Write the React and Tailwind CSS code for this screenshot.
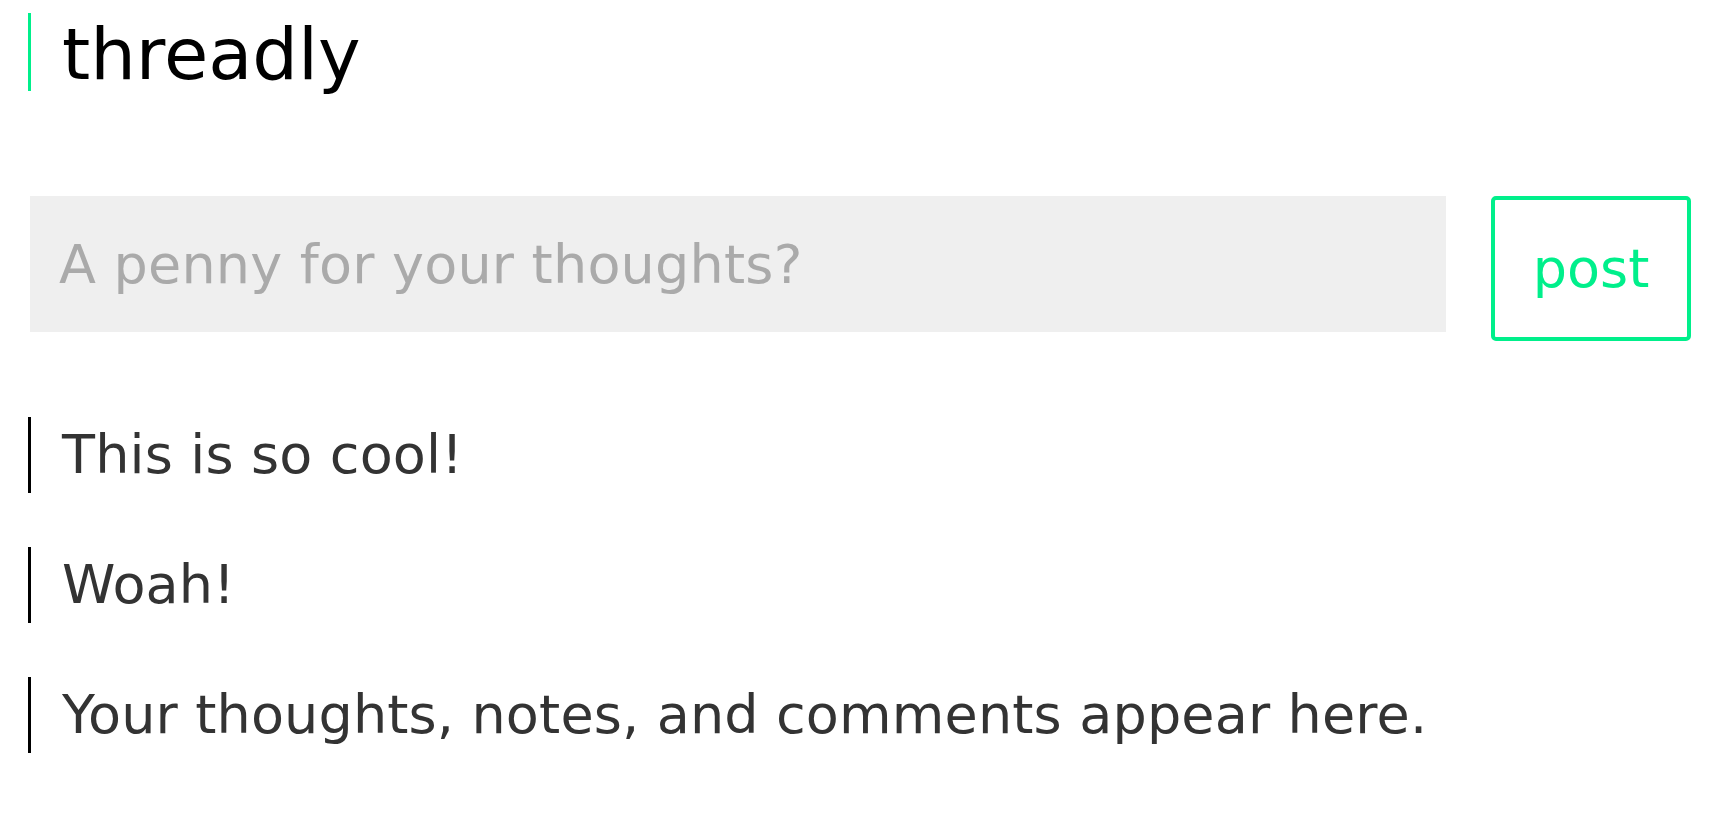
import React, { useState } from 'react';

const initialThoughts = [
  'This is so cool!',
  'Woah!',
  'Your thoughts, notes, and comments appear here.',
];

export default function App() {
  const [thoughts, setThoughts] = useState(initialThoughts);
  const [draft, setDraft] = useState('');

  const post = () => {
    if (!draft.trim()) return;
    setThoughts([draft.trim(), ...thoughts]);
    setDraft('');
  };

  return (
    <div className="min-h-screen bg-white font-['DejaVu_Sans',sans-serif] pt-[13px]">
      <h1 className="ml-[28px] h-[78px] border-l-[3px] border-[#00ef8b] pl-[31px] text-[72px] leading-[82px] font-normal text-black">
        threadly
      </h1>

      <div className="mt-[105px] flex items-start gap-[45px] pl-[30px]">
        <input
          value={draft}
          onChange={e => setDraft(e.target.value)}
          onKeyDown={e => e.key === 'Enter' && post()}
          placeholder="A penny for your thoughts?"
          className="h-[136px] w-[1416px] bg-[#efefef] pl-[29px] text-[54px] tracking-[0.2px] text-[#333] outline-none placeholder:text-[#aaa]"
        />
        <button
          onClick={post}
          className="h-[145px] w-[200px] rounded-[5px] border-4 border-[#00ef8b] bg-white text-[54px] text-[#00ef8b]"
        >
          post
        </button>
      </div>

      <ul className="mt-[76px] flex flex-col gap-[54px]">
        {thoughts.map((t, i) => (
          <li
            key={i}
            className="ml-[28px] h-[76px] border-l-[3px] border-black pl-[31px] text-[54px] leading-[76px] tracking-[0.15px] text-[#333] whitespace-nowrap"
          >
            {t}
          </li>
        ))}
      </ul>
    </div>
  );
}
